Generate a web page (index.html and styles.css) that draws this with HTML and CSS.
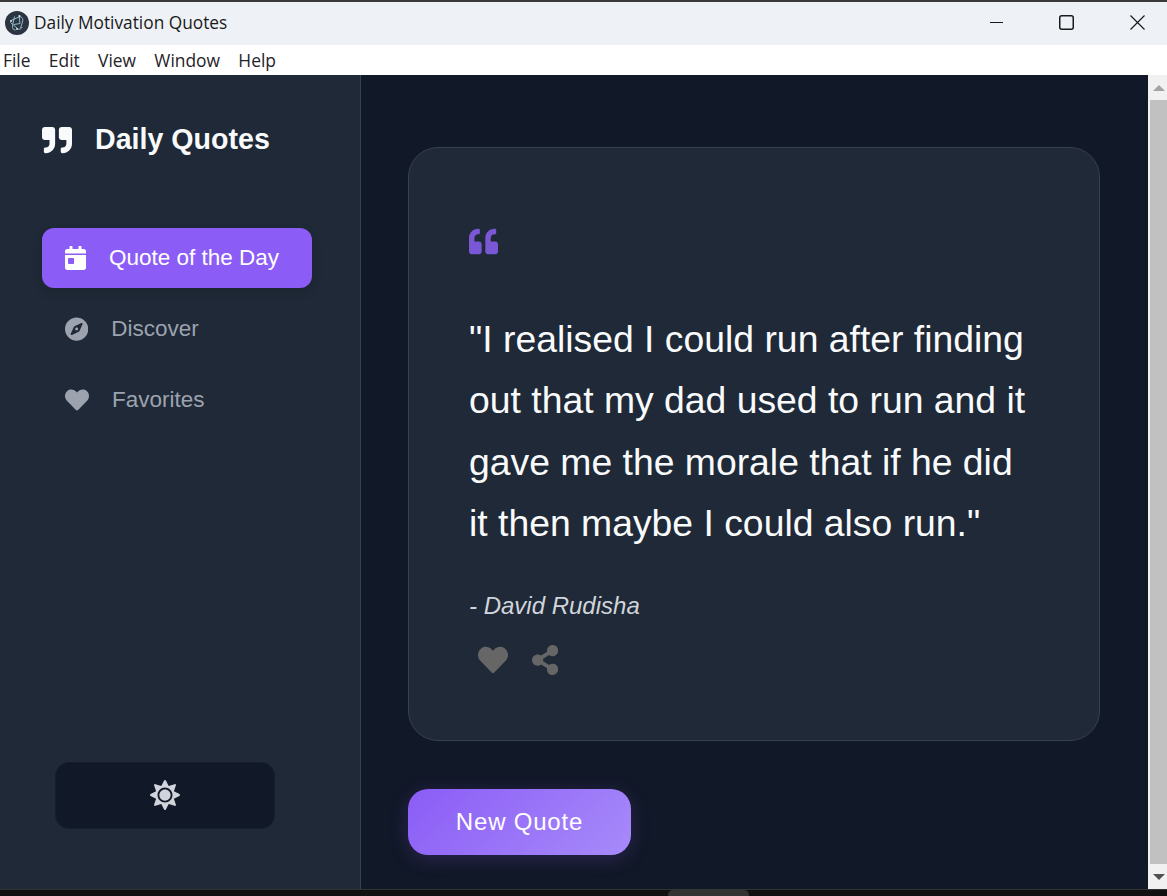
FILE: index.html

```html
<!DOCTYPE html>
<html lang="en">
<head>
  <meta charset="UTF-8" />
  <title>Daily Motivation Quotes</title>
  <link rel="stylesheet" href="styles.css">
</head>
<body>
<div class="window">
  <div class="titlebar">
    <div class="title-left">
      <svg class="app-icon" viewBox="0 0 24 24">
        <circle cx="12" cy="12" r="12" fill="#2b3440"/>
        <g fill="none" stroke="#9fc9d6" stroke-width="0.9">
          <path d="M6 9.5l8-3.5c3-1 4.5 2 3.5 5l-2 6"/>
          <path d="M5.5 11.5l7 6c2 1.5 4 .5 4.5-1.5"/>
          <path d="M9.5 5.5l-2 9c-.5 3 1 4.5 3 4.5"/>
          <path d="M14 4.5l1 8-6 1"/>
        </g>
        <g fill="#cfe3ea">
          <circle cx="6" cy="10" r="1"/>
          <circle cx="14.5" cy="5" r="1"/>
          <circle cx="12" cy="18" r="1"/>
        </g>
      </svg>
      <span class="app-title">Daily Motivation Quotes</span>
    </div>
    <div class="win-controls">
      <svg class="win-btn" viewBox="0 0 15 15"><path d="M2 7.5h15" stroke="#1a1a1a" stroke-width="1" fill="none"/></svg>
      <svg class="win-btn" viewBox="0 0 15 15"><rect x="0.75" y="0.75" width="13.5" height="13.5" rx="2" stroke="#1a1a1a" stroke-width="1.5" fill="none"/></svg>
      <svg class="win-btn" viewBox="0 0 15 15"><path d="M0.5 0.5l14 14M14.5 0.5l-14 14" stroke="#1a1a1a" stroke-width="1.2" fill="none"/></svg>
    </div>
  </div>

  <div class="menubar">
    <span>File</span>
    <span>Edit</span>
    <span>View</span>
    <span>Window</span>
    <span>Help</span>
  </div>

  <div class="content">
    <aside class="sidebar">
      <div class="logo">
        <svg class="logo-icon" viewBox="0 0 512 512"><path d="M464 32H336c-26.5 0-48 21.5-48 48v128c0 26.5 21.5 48 48 48h80v64c0 35.3-28.7 64-64 64h-8c-13.3 0-24 10.7-24 24v48c0 13.3 10.7 24 24 24h8c88.4 0 160-71.6 160-160V80c0-26.5-21.5-48-48-48zm-288 0H48C21.5 32 0 53.5 0 80v128c0 26.5 21.5 48 48 48h80v64c0 35.3-28.7 64-64 64h-8c-13.3 0-24 10.7-24 24v48c0 13.3 10.7 24 24 24h8c88.4 0 160-71.6 160-160V80c0-26.5-21.5-48-48-48z"/></svg>
        <h1>Daily Quotes</h1>
      </div>

      <nav class="nav">
        <a class="nav-item active">
          <svg class="nav-icon" viewBox="0 0 448 512"><path d="M0 464c0 26.5 21.5 48 48 48h352c26.5 0 48-21.5 48-48V192H0v272zm64-192c0-8.8 7.2-16 16-16h96c8.8 0 16 7.2 16 16v96c0 8.8-7.2 16-16 16H80c-8.8 0-16-7.2-16-16v-96zM400 64h-48V16c0-8.8-7.2-16-16-16h-32c-8.8 0-16 7.2-16 16v48H160V16c0-8.8-7.2-16-16-16h-32c-8.8 0-16 7.2-16 16v48H48C21.5 64 0 85.5 0 112v48h448v-48c0-26.5-21.5-48-48-48z"/></svg>
          <span>Quote of the Day</span>
        </a>
        <a class="nav-item">
          <svg class="nav-icon" viewBox="0 0 496 512"><path d="M225.38 233.37c-12.5 12.5-12.5 32.76 0 45.25 12.49 12.5 32.76 12.5 45.25 0 12.5-12.5 12.5-32.76 0-45.25-12.5-12.49-32.76-12.49-45.25 0zM248 8C111.03 8 0 119.03 0 256s111.03 248 248 248 248-111.03 248-248S384.97 8 248 8zm126.14 148.05L308.17 300.4a31.938 31.938 0 0 1-15.77 15.77l-144.34 65.97c-16.65 7.61-33.81-9.55-26.2-26.2l65.98-144.35a31.938 31.938 0 0 1 15.77-15.77l144.34-65.97c16.65-7.6 33.8 9.55 26.19 26.2z"/></svg>
          <span>Discover</span>
        </a>
        <a class="nav-item">
          <svg class="nav-icon" viewBox="0 0 512 512"><path d="M462.3 62.6C407.5 15.9 326 24.3 275.7 76.2L256 96.5l-19.7-20.3C186.1 24.3 104.5 15.9 49.7 62.6c-62.8 53.6-66.1 149.8-9.9 207.9l193.5 199.8c12.5 12.9 32.8 12.9 45.3 0l193.5-199.8c56.3-58.1 53-154.3-9.8-207.9z"/></svg>
          <span>Favorites</span>
        </a>
      </nav>

      <button class="theme-toggle">
        <svg class="sun-icon" viewBox="0 0 512 512"><path d="M256 160c-52.9 0-96 43.1-96 96s43.1 96 96 96 96-43.1 96-96-43.1-96-96-96zm246.4 80.5l-94.7-47.3 33.5-100.4c4.5-13.6-8.4-26.5-21.9-21.9l-100.4 33.5-47.4-94.8c-6.4-12.8-24.6-12.8-31 0l-47.3 94.7L92.7 70.8c-13.6-4.5-26.5 8.4-21.9 21.9l33.5 100.4-94.7 47.4c-12.8 6.4-12.8 24.6 0 31l94.7 47.3-33.5 100.5c-4.5 13.6 8.4 26.5 21.9 21.9l100.4-33.5 47.3 94.7c6.4 12.8 24.6 12.8 31 0l47.3-94.7 100.4 33.5c13.6 4.5 26.5-8.4 21.9-21.9l-33.5-100.4 94.7-47.3c13-6.5 13-24.7.2-31.1zm-155.9 106c-49.9 49.9-131.1 49.9-181 0-49.9-49.9-49.9-131.1 0-181 49.9-49.9 131.1-49.9 181 0 49.9 49.9 49.9 131.1 0 181z"/></svg>
      </button>
    </aside>

    <main class="main">
      <section class="card">
        <svg class="quote-mark" viewBox="0 0 512 512"><path d="M464 256h-80v-64c0-35.3 28.7-64 64-64h8c13.3 0 24-10.7 24-24V56c0-13.3-10.7-24-24-24h-8c-88.4 0-160 71.6-160 160v240c0 26.5 21.5 48 48 48h128c26.5 0 48-21.5 48-48V304c0-26.5-21.5-48-48-48zm-288 0H96v-64c0-35.3 28.7-64 64-64h8c13.3 0 24-10.7 24-24V56c0-13.3-10.7-24-24-24h-8C71.6 32 0 103.6 0 192v240c0 26.5 21.5 48 48 48h128c26.5 0 48-21.5 48-48V304c0-26.5-21.5-48-48-48z"/></svg>
        <p class="quote-text">"I realised I could run after finding out that my dad used to run and it gave me the morale that if he did it then maybe I could also run."</p>
        <p class="quote-author">- David Rudisha</p>
        <div class="quote-actions">
          <svg class="action-icon" viewBox="0 0 512 512"><path d="M462.3 62.6C407.5 15.9 326 24.3 275.7 76.2L256 96.5l-19.7-20.3C186.1 24.3 104.5 15.9 49.7 62.6c-62.8 53.6-66.1 149.8-9.9 207.9l193.5 199.8c12.5 12.9 32.8 12.9 45.3 0l193.5-199.8c56.3-58.1 53-154.3-9.8-207.9z"/></svg>
          <svg class="action-icon" viewBox="0 0 448 512"><path d="M352 320c-22.608 0-43.387 7.819-59.79 20.895l-102.486-64.054a96.551 96.551 0 0 0 0-41.683l102.486-64.054C308.613 184.181 329.392 192 352 192c53.019 0 96-42.981 96-96S405.019 0 352 0s-96 42.981-96 96c0 7.158.79 14.13 2.276 20.841L155.79 180.895C139.387 167.819 118.608 160 96 160c-53.019 0-96 42.981-96 96s42.981 96 96 96c22.608 0 43.387-7.819 59.79-20.895l102.486 64.054A96.301 96.301 0 0 0 256 416c0 53.019 42.981 96 96 96s96-42.981 96-96-42.981-96-96-96z"/></svg>
        </div>
      </section>
      <button class="new-quote">New Quote</button>
    </main>

    <div class="scrollbar">
      <div class="scroll-end"><div class="arrow-up"></div></div>
      <div class="scroll-thumb"></div>
      <div class="scroll-end"><div class="arrow-down"></div></div>
    </div>
  </div>

  <div class="taskbar"><div class="task-tab"></div></div>
</div>
</body>
</html>
```

FILE: styles.css

```css
html, body {
  margin: 0;
  height: 100%;
  overflow: hidden;
}
body {
  font-family: "Liberation Sans", Arial, sans-serif;
  background: #111;
}
.window {
  height: 896px;
  display: flex;
  flex-direction: column;
  border-top: 2px solid #3a3a3a;
  box-sizing: border-box;
}

/* title bar */
.titlebar {
  height: 43px;
  flex: none;
  background: #eef2f6;
  display: flex;
  align-items: center;
  justify-content: space-between;
}
.title-left {
  display: flex;
  align-items: center;
  gap: 5px;
  padding: 0 0 2px 5px;
}
.app-icon {
  width: 24px;
  height: 24px;
}
.app-title {
  font-family: "Open Sans", sans-serif;
  font-size: 17.3px;
  color: #1a1a1a;
}
.win-controls {
  display: flex;
  gap: 56px;
  padding: 0 22px 2px 0;
}
.win-btn {
  width: 15px;
  height: 15px;
}

/* menu */
.menubar {
  height: 30px;
  flex: none;
  background: #fff;
  display: flex;
  align-items: center;
  gap: 18.3px;
  padding: 0 0 1px 3px;
  box-sizing: border-box;
  font-family: "Open Sans", sans-serif;
  font-size: 17.4px;
  color: #1f2328;
}

.content {
  flex: 1;
  display: flex;
  min-height: 0;
}

/* sidebar */
.sidebar {
  flex: none;
  width: 318px;
  background: #1f2937;
  border-right: 1px solid #374151;
  display: flex;
  flex-direction: column;
  padding: 50px 0 60px 42px;
}
.logo {
  display: flex;
  align-items: center;
  gap: 23px;
  height: 30px;
}
.logo-icon {
  width: 30px;
  height: 30px;
  fill: #f9fafb;
}
.logo h1 {
  margin: 0 0 2px;
  font-size: 28.6px;
  font-weight: bold;
  color: #f9fafb;
}
.nav {
  display: flex;
  flex-direction: column;
  gap: 11px;
  margin-top: 73px;
  width: 270px;
}
.nav-item {
  height: 60px;
  display: flex;
  align-items: center;
  gap: 23px;
  padding-left: 23px;
  border-radius: 12px;
  font-size: 22.5px;
  color: #9ca3af;
}
.nav-icon {
  height: 24px;
  fill: #9ca3af;
}
.nav-item.active {
  background: #8b5cf6;
  color: #fff;
  box-shadow: 0 4px 12px rgba(0,0,0,0.12);
}
.nav-item.active .nav-icon {
  fill: #fff;
}
.theme-toggle {
  margin-top: auto;
  margin-left: 13px;
  width: 220px;
  height: 67px;
  background: #111827;
  border: 1px solid #151e2c;
  border-radius: 14px;
  display: flex;
  align-items: center;
  justify-content: center;
  padding: 0 0 2px;
}
.sun-icon {
  width: 30px;
  height: 30px;
  fill: #d1d5db;
}

/* main */
.main {
  flex: 1;
  background: #111827;
  padding: 72px 48px 0 47px;
  min-width: 0;
}
.card {
  height: 594px;
  box-sizing: border-box;
  background: #1f2937;
  border: 1px solid #374151;
  border-radius: 30px;
  padding: 79px 60px 0;
}
.quote-mark {
  display: block;
  width: 29px;
  height: 29px;
  fill: #7a57d4;
}
.quote-text {
  margin: 53px 0 0;
  font-size: 37.35px;
  line-height: 61.3px;
  color: #f9fafb;
}
.quote-author {
  margin: 30px 0 0;
  font-size: 24px;
  line-height: 44px;
  font-style: italic;
  color: #d1d5db;
}
.quote-actions {
  display: flex;
  align-items: center;
  gap: 24px;
  margin-top: 17px;
  padding-left: 9px;
}
.action-icon {
  height: 30px;
  fill: #666;
}
.new-quote {
  display: block;
  margin-top: 48px;
  width: 223px;
  height: 66px;
  border: none;
  border-radius: 20px;
  background: linear-gradient(135deg, #8b5cf6, #a78bfa);
  box-shadow: 0 4px 20px rgba(139,92,246,0.2);
  color: #fff;
  font-family: inherit;
  font-size: 24px;
  letter-spacing: 0.8px;
}

/* scrollbar */
.scrollbar {
  width: 19px;
  flex: none;
  display: flex;
  flex-direction: column;
  background: #f1f1f1;
}
.scroll-end {
  height: 25px;
  display: flex;
  align-items: center;
  justify-content: center;
  padding-left: 2px;
}
.scroll-thumb {
  flex: 1;
  margin-left: 2px;
  background: #c1c1c1;
}
.arrow-up {
  border: 6px solid transparent;
  border-top: 0;
  border-bottom-color: #a3a3a3;
}
.arrow-down {
  border: 6px solid transparent;
  border-bottom: 0;
  border-top-color: #505050;
}

.taskbar {
  height: 7px;
  flex: none;
  background: #111;
  border-top: 1px solid #333;
  box-sizing: border-box;
}
.task-tab {
  width: 81px;
  height: 6px;
  margin-left: 668px;
  background: #333;
  border-radius: 5px 5px 0 0;
}
```
